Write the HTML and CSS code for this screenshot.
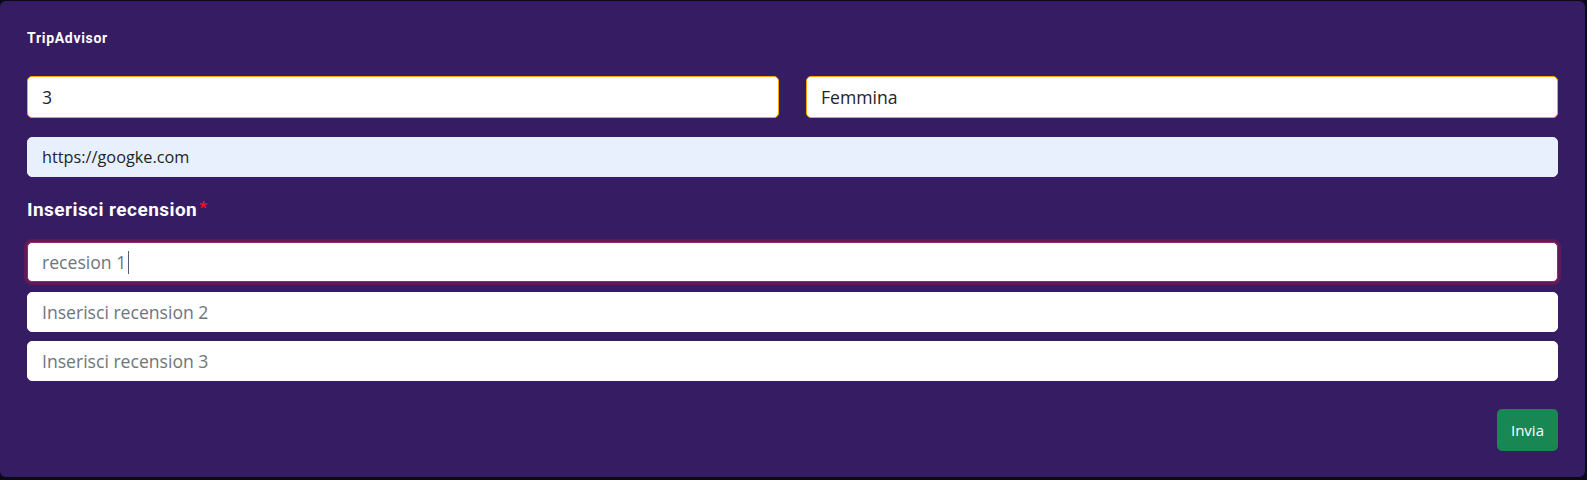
FILE: index.html
```html
<!DOCTYPE html>
<html lang="it">
<head>
<meta charset="utf-8">
<title>TripAdvisor</title>
<link rel="stylesheet" href="styles.css">
</head>
<body>
<form class="card">
  <h6 class="card-title">TripAdvisor</h6>
  <div class="row">
    <input class="field field-warn" type="text" value="3">
    <input class="field field-warn" type="text" value="Femmina">
  </div>
  <input class="field field-fill url" type="text" value="https://googke.com">
  <label class="section-label">Inserisci recension<span class="req">*</span></label>
  <div class="reviews">
    <div class="field field-focus"><span class="typed">recesion 1</span><span class="caret"></span></div>
    <input class="field" type="text" placeholder="Inserisci recension 2">
    <input class="field" type="text" placeholder="Inserisci recension 3">
  </div>
  <div class="actions">
    <button type="button" class="btn-send">Invia</button>
  </div>
</form>
</body>
</html>
```
FILE: styles.css
```css
html, body {
  margin: 0;
  padding: 0;
  background: #0b0a1a;
}
body {
  padding-top: 1px;
  width: 1587px;
  height: 479px;
  overflow: hidden;
}
.card {
  box-sizing: border-box;
  width: 1585px;
  height: 476px;
  background: #361c62;
  border-radius: 6px;
  padding: 27px 27px 0 27px;
  display: flex;
  flex-direction: column;
  font-family: "Open Sans", sans-serif;
}
.card-title {
  margin: 0;
  height: 20px;
  line-height: 20px;
  font-family: Roboto, sans-serif;
  font-weight: 700;
  font-size: 14px;
  letter-spacing: 0.7px;
  color: #ffffff;
}
.row {
  margin-top: 28px;
  display: grid;
  grid-template-columns: 1fr 1fr;
  column-gap: 27px;
}
.field {
  box-sizing: border-box;
  display: flex;
  align-items: center;
  width: 100%;
  height: 40px;
  margin: 0;
  padding: 0 14px;
  border: 1px solid #ffffff;
  border-radius: 5px;
  background: #ffffff;
  font-family: "Open Sans", sans-serif;
  font-size: 17.6px;
  color: #212529;
  outline: none;
}
.field::placeholder {
  color: #6c757d;
}
.field-warn {
  height: 42px;
  border-color: #ffa500;
}
.field-fill {
  background: #e8f0fe;
  border-color: #e8f0fe;
  font-size: 16.3px;
}
.url {
  margin-top: 19px;
}
.section-label {
  margin-top: 21px;
  height: 24px;
  line-height: 24px;
  font-family: Roboto, sans-serif;
  font-weight: 700;
  font-size: 19px;
  letter-spacing: 0.45px;
  color: #ffffff;
}
.req {
  color: #f0142c;
  font-size: 17px;
  margin-left: 2px;
  position: relative;
  top: -3px;
}
.reviews {
  margin-top: 20px;
  display: flex;
  flex-direction: column;
  gap: 9px;
}
.field-focus {
  height: 40px;
  border-color: #8a2a78;
  box-shadow: 0 0 0 3px #611a55;
  margin-bottom: 1px;
}
.typed {
  color: #6c757d;
}
.caret {
  display: inline-block;
  width: 1px;
  height: 23px;
  margin-left: 2px;
  background: #555f75;
}
.actions {
  margin-top: 28px;
  display: flex;
  justify-content: flex-end;
}
.btn-send {
  box-sizing: border-box;
  width: 61px;
  height: 42px;
  border: none;
  border-radius: 5px;
  background: #198754;
  color: #ffffff;
  font-family: "Open Sans", sans-serif;
  font-size: 15px;
  padding: 0;
}
```
